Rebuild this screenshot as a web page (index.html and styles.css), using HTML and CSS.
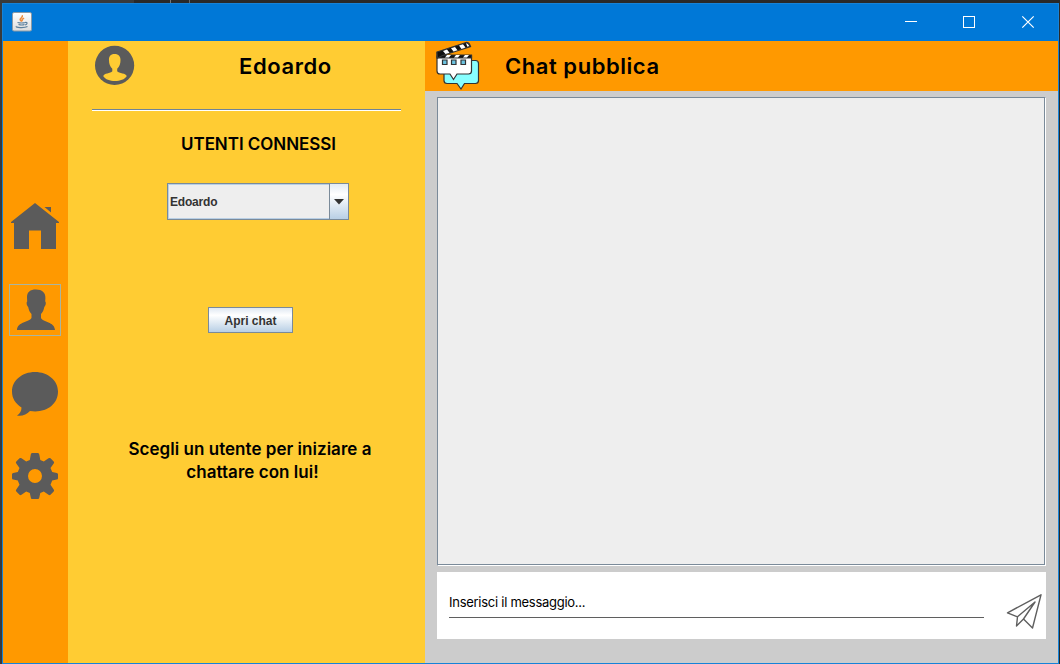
FILE: index.html
```html
<!DOCTYPE html>
<html lang="it">
<head>
<meta charset="utf-8">
<title>Chat</title>
<link rel="stylesheet" href="styles.css">
</head>
<body>
<div class="desktop">
  <div class="window">
    <header class="titlebar">
      <svg class="java" width="20" height="20" viewBox="0 0 20 20">
        <defs><linearGradient id="tile" x1="0" y1="0" x2="0" y2="1"><stop offset="0" stop-color="#fff"/><stop offset="1" stop-color="#dcdcdc"/></linearGradient></defs>
        <rect x=".5" y=".5" width="19" height="18.500" rx="1.500" fill="url(#tile)" stroke="#8b9aa6"/>
        <path d="M9.500 9.500C5.500 6.500 11.500 6 10.300 3.200M10.500 9.300C9 7.500 11 7 12 6" fill="none" stroke="#ed8b3b" stroke-width="1.500"/>
        <path d="M5.500 10.500q4 1 8 0M6.500 12.500q3.500 1 6 0M13 10.500c3-.7 2.500 2 0 2.500M4.500 14.200c-2 1.500 8 2 11 .3" fill="none" stroke="#5b7f9c" stroke-width="1.200"/>
      </svg>
      <svg class="controls" width="132" height="14" viewBox="0 0 132 14" fill="none" stroke="#fff" stroke-width="1">
        <path d="M1 6.500h12" shape-rendering="crispEdges"/>
        <rect x="59.500" y="1.500" width="11" height="11" shape-rendering="crispEdges"/>
        <path d="M118.300 1.300l11.400 11.400M129.700 1.300L118.300 12.700" stroke-width="1.200"/>
      </svg>
    </header>
    <div class="body">
      <nav class="rail">
        <a class="rail-item"><svg width="52" height="52" viewBox="0 0 52 52" fill="#5b5b5b"><path d="M26 4L50 23v1h-3v26H32V31.500H20V50H5V24H2v-1z"/><path d="M35.500 8h6.500v5.500z"/></svg></a>
        <a class="rail-item focused"><svg width="50" height="50" viewBox="0 0 50 50" fill="#5b5b5b"><path d="M26 4.500c6 0 9.600 3 9.400 8.500l-.2 3.500c1 .5.800 4-.9 5.500-.5 3-1.500 5-3.300 7v4c2 4.500 13.500 3.500 14 12H7c.5-8.500 12-7.500 14.500-12v-4c-1.800-2-2.800-4-3.300-7-1.700-1.500-1.900-5-1-5.500L17 12c0-5 3-7.500 9-7.500z"/></svg></a>
        <a class="rail-item"><svg width="52" height="52" viewBox="0 0 52 52" fill="#5b5b5b"><path d="M26 4C13 4 3 12.500 3 23.500c0 7 3.500 12 9.500 16 0 3.500-1.500 6-4.500 8 5 1 9.500-1 13-4.500 15 2.500 28-6 28-19.500C49 12.500 39 4 26 4z"/></svg></a>
        <a class="rail-item"><svg width="52" height="52" viewBox="0 0 52 52" fill="#5b5b5b"><path fill-rule="evenodd" d="M23 3h6q1 0 1.300 1.500l1 5.500 3.500 1.500 4.700-3.200q1.200-.8 2 0l3.200 3.200q.9.900 0 2L41.500 18l1.700 4 4.600.9q1.200.2 1.200 1.300v4q0 1.200-1.200 1.400l-4.600.9-1.700 4.300 3.200 4.700q.9 1.200 0 2l-3.200 3.200q-.8.900-2 0l-4.700-3.200-3.500 1.500-1 4.500Q30 49 29 49h-6q-1 0-1.200-1.500l-1-4.500-3.600-1.500-4.700 3.200q-1.200.9-2 0l-3.200-3.200q-.9-.8 0-2l3.200-4.700-1.700-4.300-4.600-.9Q3 29.400 3 28.200v-4q0-1.100 1.200-1.300l4.600-.9 1.700-4-3.200-4.500q-.9-1.100 0-2l3.200-3.200q.8-.8 2 0l4.700 3.200 3.600-1.500 1-5.500Q22 3 23 3zM26 19a7 7 0 1 0 0 14 7 7 0 0 0 0-14z"/></svg></a>
      </nav>
      <aside class="users">
        <div class="profile">
          <svg width="40" height="40" viewBox="0 0 40 40"><circle cx="19.600" cy="20.400" r="19.600" fill="#5b5b5b"/><path fill="#fc3" d="M19.500 9c4.200 0 6.200 2.700 6 6.300 0 3.800-1 6.200-3.300 8.500v2.400c1.500 2.200 9.300 1.800 9.500 5C28 37.500 12 37.500 8.300 31.200c.2-3.200 7.500-2.800 9-5v-2.400c-2.300-2.300-3.300-4.700-3.300-8.500C13.700 11.700 15.500 9 19.500 9z"/></svg>
          <h1 class="name">Edoardo</h1>
        </div>
        <div class="rule"></div>
        <h2 class="caption">UTENTI CONNESSI</h2>
        <div class="combo"><span class="combo-value">Edoardo</span><span class="combo-arrow"><svg width="11" height="6" viewBox="0 0 11 6"><path d="M0 0h10L5 5.500z" fill="#333"/></svg></span></div>
        <button class="open">Apri chat</button>
        <p class="hint">Scegli un utente per iniziare a<br><span class="hint-end">chattare con lui!</span></p>
      </aside>
      <main class="chat">
        <div class="chat-head">
          <svg width="46" height="50" viewBox="0 0 46 50" stroke="#333" stroke-width="1.200">
            <path fill="#8ff" d="M10 19.500h30.500q3 0 3 3v17q0 3-3 3H29.500L26 48l-4-5.500H12q-3 0-3-3v-20z"/>
            <path fill="#fff" d="M2 15h34.500v15q0 3-3 3H22l-3.500 5.500L15 33H5q-3 0-3-3z"/>
            <path fill="#111" d="M2 12v5h34.500v-3H7z"/>
            <path fill="#fff" stroke="none" d="M10 16.500l2-2.500h4l-2 2.500zM19 16.500l2-2.500h4l-2 2.500zM28 16.500l2-2.500h4l-2 2.500z"/>
            <path fill="#111" d="M2 11L31 1.500q3-.5 4.500 4L7.500 14.500 2.500 17z"/>
            <path fill="#fff" stroke="none" d="M8 10l4-1.400 2.500 3.200-4 1.300zM16 7.200l4-1.300 2.500 3.300-4 1.300zM24 4.500l4-1.300 2.500 3.400-4 1.300zM31 2.200q2-.2 3.300 2.900l-2 .6z"/>
            <path fill="#6cc3e0" d="M7.500 19H12v4.500H7.500zM16.500 19H21v4.500h-4.500zM26 19h4.500v4.500H26z"/>
          </svg>
          <h1 class="chat-title">Chat pubblica</h1>
        </div>
        <div class="messages"></div>
        <div class="composer">
          <div class="field">Inserisci il messaggio...</div>
          <svg class="send" width="36" height="36" viewBox="0 0 36 36" fill="none" stroke="#5f5f5f" stroke-width="1.400" stroke-linejoin="round"><path d="M35 .8L1.500 18.800l10 4L29 8 17.500 25 26.500 34zM11.500 22.800L10.500 32l7-7"/></svg>
        </div>
      </main>
    </div>
  </div>
</div>
</body>
</html>
```
FILE: styles.css
```css
* { box-sizing: border-box; }
body { margin: 0; font-family: Inter, "Open Sans", sans-serif; color: #000; }
h1, h2, p { margin: 0; white-space: nowrap; font-weight: 600; }
svg { display: block; flex: none; }
.desktop { width: 1060px; height: 664px; padding: 3px 1px 0 2px; background: linear-gradient(90deg, #383a3c 0 134px, #292929 134px 170px, #777 170px 171px, #292929 171px 189px, #666 189px 190px, #292929 190px); overflow: hidden; }
.window { width: 1057px; height: 661px; border: 1px solid #1683d8; border-top: 0; background: #ccc; display: flex; flex-direction: column; }
.titlebar { height: 38px; flex: none; background: #0078d7; border-top: 1px solid #1683d8; display: flex; justify-content: space-between; padding: 8px 22px 0 9px; }
.controls { margin-top: 3px; }
.body { flex: 1; display: flex; min-height: 0; }
.rail { width: 65px; background: #f90; padding: 158px 0 0 6px; display: flex; flex-direction: column; }
.rail-item { width: 52px; height: 52px; margin-bottom: 33px; }
.rail-item:nth-child(n + 2) { margin-bottom: 32px; }
.rail-item:nth-child(n + 3) { margin-bottom: 30px; }
.focused { border: 1px solid #a9b5a0; }
.users { width: 357px; background: #fc3; }
.profile { height: 68px; padding: 4px 0 0 27px; display: flex; }
.name { margin-left: 104px; font-size: 22px; line-height: 42px; letter-spacing: .6px; }
.rule { width: 309px; height: 2px; margin-left: 24px; background: linear-gradient(#6f8397 50%, #fff 50%); }
.caption { margin: 22px 0 0 113px; font-size: 17px; line-height: 22px; letter-spacing: -.05px; }
.combo { width: 182px; height: 37px; margin: 28px 0 0 99px; border: 1px solid #7a8a99; background: #eee; display: flex; box-shadow: inset 0 0 0 1px #b8cfe5; font: bold 12px "Liberation Sans", sans-serif; color: #333; }
.combo-value { flex: 1; padding-left: 2px; line-height: 36px; letter-spacing: -.2px; }
.combo-arrow { width: 19px; border-left: 1px solid #7a8a99; background: linear-gradient(#e3ebf4, #fff 30%, #b8cfe5); display: flex; align-items: center; justify-content: center; }
.open { display: block; width: 85px; height: 26px; margin: 87px 0 0 140px; padding: 1px 0 0; border: 1px solid #7a8a99; background: linear-gradient(#dfe8f2, #fff 30%, #b8cfe5); font: bold 12px "Liberation Sans", sans-serif; color: #333; }
.hint { width: 244px; margin: 105px 0 0 60px; font-size: 17px; line-height: 23px; letter-spacing: .03px; text-align: center; }
.hint-end { padding-left: 5px; }
.chat { flex: 1; display: flex; flex-direction: column; }
.chat-head { height: 50px; background: #f90; padding-left: 10px; display: flex; }
.chat-title { margin-left: 24px; font-size: 22px; line-height: 50px; letter-spacing: .55px; }
.messages { width: 609px; height: 469px; margin: 6px 0 0 12px; background: #eee; border: 1px solid #7a8a99; box-shadow: inset -1px -1px #7a8a99; border-right-color: #fff; border-bottom-color: #fff; }
.composer { width: 609px; height: 67px; margin: 6px 0 0 12px; background: #fff; padding: 21px 4px 0 12px; display: flex; justify-content: space-between; }
.send { margin-top: 1px; }
.field { width: 535px; height: 25px; border-bottom: 1px solid #5f5f5f; font-size: 13px; line-height: 19px; letter-spacing: -.27px; white-space: nowrap; }
```
